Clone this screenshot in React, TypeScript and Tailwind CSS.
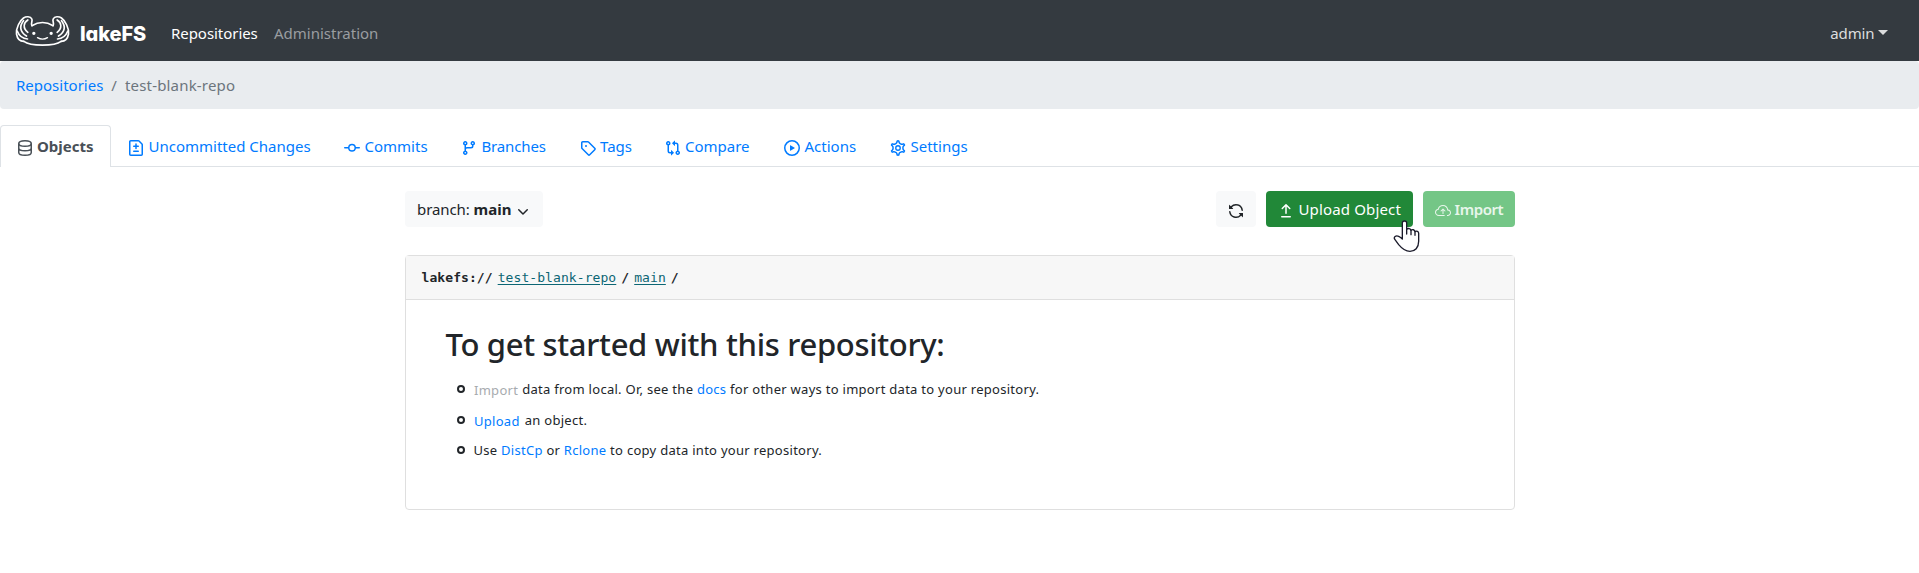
import React from "react";

const icons = {
  fileDiff:
    "M2.75 1.5a.25.25 0 00-.25.25v12.5c0 .138.112.25.25.25h10.5a.25.25 0 00.25-.25V4.664a.25.25 0 00-.073-.177l-2.914-2.914a.25.25 0 00-.177-.073H2.75zM1 1.75C1 .784 1.784 0 2.75 0h7.586c.464 0 .909.184 1.237.513l2.914 2.914c.329.328.513.773.513 1.237v9.586A1.75 1.75 0 0113.25 16H2.75A1.75 1.75 0 011 14.25V1.75zm7 1.5a.75.75 0 01.75.75v1.5h1.5a.75.75 0 010 1.5h-1.5v1.5a.75.75 0 01-1.5 0V7h-1.5a.75.75 0 010-1.5h1.5V4A.75.75 0 018 3.25zm-3 8a.75.75 0 01.75-.75h4.5a.75.75 0 010 1.5h-4.5a.75.75 0 01-.75-.75z",
  commit:
    "M10.5 7.75a2.5 2.5 0 11-5 0 2.5 2.5 0 015 0zm1.43.75a4.002 4.002 0 01-7.86 0H.75a.75.75 0 110-1.5h3.32a4.001 4.001 0 017.86 0h3.32a.75.75 0 110 1.5h-3.32z",
  branch:
    "M11.75 2.5a.75.75 0 100 1.5.75.75 0 000-1.5zm-2.25.75a2.25 2.25 0 113 2.122V6A2.5 2.5 0 0110 8.5H6a1 1 0 00-1 1v1.128a2.251 2.251 0 11-1.5 0V5.372a2.25 2.25 0 111.5 0v1.836A2.492 2.492 0 016 7h4a1 1 0 001-1v-.628A2.25 2.25 0 019.5 3.25zM4.25 12a.75.75 0 100 1.5.75.75 0 000-1.5zM3.5 3.25a.75.75 0 111.5 0 .75.75 0 01-1.5 0z",
  tag:
    "M2.5 7.775V2.75a.25.25 0 01.25-.25h5.025a.25.25 0 01.177.073l6.25 6.25a.25.25 0 010 .354l-5.025 5.025a.25.25 0 01-.354 0l-6.25-6.25a.25.25 0 01-.073-.177zm-1.5 0V2.75C1 1.784 1.784 1 2.75 1h5.025c.464 0 .91.184 1.238.513l6.25 6.25a1.75 1.75 0 010 2.474l-5.026 5.026a1.75 1.75 0 01-2.474 0l-6.25-6.25A1.75 1.75 0 011 7.775zM6 5a1 1 0 100 2 1 1 0 000-2z",
  compare:
    "M9.573.677L7.177 3.073a.25.25 0 000 .354l2.396 2.396A.25.25 0 0010 5.646V4h1a1 1 0 011 1v5.628a2.251 2.251 0 101.5 0V5A2.5 2.5 0 0011 2.5h-1V.854a.25.25 0 00-.427-.177zM6 12v-1.646a.25.25 0 01.427-.177l2.396 2.396a.25.25 0 010 .354l-2.396 2.396A.25.25 0 016 15.146V13.5H5A2.5 2.5 0 012.5 11V5.372a2.25 2.25 0 111.5 0V11a1 1 0 001 1h1zM4 3.25a.75.75 0 11-1.5 0 .75.75 0 011.5 0zM12.75 12a.75.75 0 100 1.5.75.75 0 000-1.5z",
  play:
    "M1.5 8a6.5 6.5 0 1113 0 6.5 6.5 0 01-13 0zM8 0a8 8 0 100 16A8 8 0 008 0zM6.379 5.227A.25.25 0 006 5.442v5.117a.25.25 0 00.379.214l4.264-2.559a.25.25 0 000-.428L6.379 5.227z",
  sync:
    "M8 2.5a5.487 5.487 0 00-4.131 1.869l1.204 1.204A.25.25 0 014.896 6H1.25A.25.25 0 011 5.75V2.104a.25.25 0 01.427-.177l1.38 1.38A7.001 7.001 0 0114.95 7.16a.75.75 0 11-1.49.178A5.501 5.501 0 008 2.5zM1.705 8.005a.75.75 0 01.834.656 5.501 5.501 0 009.592 2.97l-1.204-1.204a.25.25 0 01.177-.427h3.646a.25.25 0 01.25.25v3.646a.25.25 0 01-.427.177l-1.38-1.38A7.001 7.001 0 011.05 8.84a.75.75 0 01.656-.834z",
  chevron:
    "M12.78 6.22a.75.75 0 010 1.06l-4.25 4.25a.75.75 0 01-1.06 0L3.22 7.28a.75.75 0 011.06-1.06L8 9.94l3.72-3.72a.75.75 0 011.06 0z",
  upload:
    "M8.53 1.22a.75.75 0 00-1.06 0L3.72 4.97a.75.75 0 001.06 1.06l2.47-2.47v6.69a.75.75 0 001.5 0V3.56l2.47 2.47a.75.75 0 101.06-1.06L8.53 1.22zM3.75 13a.75.75 0 000 1.5h8.5a.75.75 0 000-1.5h-8.5z",
};

const gearPath =
  "M7.429 1.525a6.593 6.593 0 011.142 0c.036.003.108.036.137.146l.289 1.105c.147.56.55.967.997 1.189.174.086.341.183.501.29.417.278.97.423 1.53.27l1.102-.303c.11-.03.175.016.195.046.219.31.41.641.573.989.014.031.022.11-.059.19l-.815.806c-.411.406-.562.957-.53 1.456a4.588 4.588 0 010 .582c-.032.499.119 1.05.53 1.456l.815.806c.08.08.073.159.059.19a6.494 6.494 0 01-.573.99c-.02.029-.086.074-.195.045l-1.103-.303c-.559-.153-1.112-.008-1.529.27-.16.107-.327.204-.5.29-.449.222-.851.628-.998 1.189l-.289 1.105c-.029.11-.101.143-.137.146a6.613 6.613 0 01-1.142 0c-.036-.003-.108-.037-.137-.146l-.289-1.105c-.147-.56-.55-.967-.997-1.189a4.502 4.502 0 01-.501-.29c-.417-.278-.97-.423-1.53-.27l-1.102.303c-.11.03-.175-.016-.195-.046a6.492 6.492 0 01-.573-.989c-.014-.031-.022-.11.059-.19l.815-.806c.411-.406.562-.957.53-1.456a4.587 4.587 0 010-.582c.032-.499-.119-1.05-.53-1.456l-.815-.806c-.08-.08-.073-.159-.059-.19a6.44 6.44 0 01.573-.99c.02-.029.086-.075.195-.045l1.103.303c.559.153 1.112.008 1.529-.27.16-.107.327-.204.5-.29.449-.222.851-.628.998-1.189l.289-1.105c.029-.11.101-.143.137-.146z";

function Icon({ name, className = "" }: { name: keyof typeof icons; className?: string }) {
  return (
    <svg viewBox="0 0 16 16" fill="currentColor" fillRule="evenodd" className={`size-4 shrink-0 ${className}`}>
      <path d={icons[name]} />
    </svg>
  );
}

function DatabaseIcon() {
  return (
    <svg viewBox="0 0 16 16" fill="none" stroke="currentColor" strokeWidth="1.5" className="mt-1.5 size-4 shrink-0">
      <ellipse cx="8" cy="3.5" rx="6.25" ry="2.75" />
      <path d="M1.75 3.5v9c0 1.52 2.8 2.75 6.25 2.75s6.25-1.23 6.25-2.75v-9M1.75 8c0 1.52 2.8 2.75 6.25 2.75S14.25 9.520 14.25 8" />
    </svg>
  );
}

function GearIcon() {
  return (
    <svg viewBox="0 0 16 16" fill="none" stroke="currentColor" strokeWidth="1.35" className="mt-1.5 size-4 shrink-0">
      <path d={gearPath} transform="translate(8 8) scale(1.1) translate(-8 -8)" />
      <circle cx="8" cy="8" r="2.25" />
    </svg>
  );
}

function CloudUploadIcon() {
  return (
    <svg viewBox="0 0 16 16" fill="currentColor" className="mt-1 size-4 shrink-0">
      <path
        fillRule="evenodd"
        d="M4.406 1.342A5.53 5.53 0 0 1 8 0c2.690 0 4.923 2 5.166 4.579C14.758 4.804 16 6.137 16 7.773 16 9.569 14.502 11 12.687 11H10a.5.5 0 0 1 0-1h2.688C13.979 10 15 8.988 15 7.773c0-1.216-1.020-2.228-2.313-2.228h-.5v-.5C12.188 2.825 10.328 1 8 1a4.530 4.530 0 0 0-2.941 1.100c-.757.652-1.153 1.438-1.153 2.055v.448l-.445.049C2.064 4.805 1 5.952 1 7.318 1 8.785 2.230 10 3.781 10H12v1H3.781C1.708 11 0 9.366 0 7.318c0-1.763 1.266-3.223 2.942-3.593.143-.863.698-1.723 1.464-2.383z"
        transform="translate(0 2)"
      />
      <path d="M7.646 5.646a.5.5 0 0 1 .708 0l2 2a.5.5 0 0 1-.708.708L8.500 7.207V10.500a.5.5 0 0 1-1 0V7.207L6.354 8.354a.5.5 0 1 1-.708-.708z" />
    </svg>
  );
}

function AxolotlLogo() {
  return (
    <svg viewBox="46 45 164 96" className="h-8 w-[55px]" fill="none" stroke="white" strokeWidth="5" strokeLinecap="round" strokeLinejoin="round">
      <path d="M96 77Q128 58 160 77" />
      <path d="M96 77C92 70 99 64 96 57C92 48 78 49 71 54C60 62 48 84 50 102C52 114 58 124 72 124" />
      <path d="M160 77C164 70 157 64 160 57C164 48 178 49 185 54C196 62 208 84 206 102C204 114 198 124 184 124" />
      <path d="M72 124C92 139 164 139 184 124" />
      <path d="M84 60C71 68 68 84 84 97M71 62C58 78 60 96 80 108M52 93C58 108 66 116 83 117" />
      <path d="M172 60C185 68 188 84 172 97M185 62C198 78 196 96 176 108M204 93C198 108 190 116 173 117" />
      <path d="M113 113Q128 122 143 113" strokeWidth="4" />
      <circle cx="102" cy="100" r="2.500" fill="white" />
      <circle cx="154" cy="100" r="2.500" fill="white" />
    </svg>
  );
}

function HandCursor() {
  return (
    <svg
      viewBox="579 147 84 102"
      className="absolute top-[28px] left-[127px] z-10 h-[34px] w-[28px]"
      fill="white"
      stroke="#1b1b2b"
      strokeWidth="4"
      strokeLinejoin="round"
      strokeLinecap="round"
    >
      <path d="M607 207V159C607 151 620 151 620 159V178C624 174 632 175 633 181C637 177 644 179 645 185C650 182 656 184 656 190V214C656 233 645 244 630 244C614 244 605 235 596 224L585 209C579 201 588 195 596 199Q602 202 607 207Z" />
      <path d="M620 178V192M633 181V194M645 185V196" fill="none" />
    </svg>
  );
}

function Tab({ icon, label, className }: { icon: React.ReactNode; label: string; className: string }) {
  return (
    <a className={`flex h-full gap-[4.500px] pt-[9px] pl-[17px] leading-6 text-[#007bff] ${className}`}>
      {icon}
      <span className="whitespace-nowrap">{label}</span>
    </a>
  );
}

function Bullet() {
  return <span className="mr-[9px] size-2 shrink-0 self-center rounded-full border-2 border-[#212529]" />;
}

export default function App() {
  return (
    <div className="min-h-[573px] bg-white font-['Noto_Sans',sans-serif] text-[15px] leading-6 text-[#212529]">
      <nav className="flex h-[61px] items-start bg-[#343a40] pl-[15px]">
        <div className="flex w-[156px] pt-[15px]">
          <AxolotlLogo />
          <span className="ml-[10px] pt-[7px] font-['Inter',sans-serif] text-[20px] leading-6 font-extrabold tracking-[-0.1px] text-white [font-feature-settings:'cv11']">
            lakeFS
          </span>
        </div>
        <span className="w-[103px] pt-[21px] tracking-[-0.050px] text-white">Repositories</span>
        <span className="pt-[21px] text-[#9a9da0]">Administration</span>
        <span className="mr-[31px] ml-auto flex pt-[21px] text-[#dcddde]">
          <span className="tracking-[-0.100px]">admin</span>
          <span className="mt-[9px] ml-[3.500px] h-0 border-x-[5px] border-t-[5px] border-x-transparent border-t-[#dcddde]" />
        </span>
      </nav>

      <div className="flex h-12 gap-2 rounded bg-[#e9ecef] px-4 py-3 text-[#6c757d]">
        <a className="text-[#007bff]">Repositories</a>
        <span>/</span>
        <span className="tracking-[0.180px]">test-blank-repo</span>
      </div>

      <div className="mt-4 flex h-[42px] border-b border-[#dee2e6]">
        <a className="-mb-px flex w-[111px] gap-1 rounded-t border border-b-0 border-[#dee2e6] bg-white pt-2 pl-4 font-bold text-[#495057]">
          <DatabaseIcon />
          <span>Objects</span>
        </a>
        <Tab className="w-[216px]" icon={<Icon name="fileDiff" className="mt-1.5" />} label="Uncommitted Changes" />
        <Tab className="w-[117px]" icon={<Icon name="commit" className="mt-1.5" />} label="Commits" />
        <Tab className="w-[118.500px] tracking-[-0.150px]" icon={<Icon name="branch" className="mt-1.5" />} label="Branches" />
        <Tab className="w-[85px]" icon={<Icon name="tag" className="mt-1.5" />} label="Tags" />
        <Tab className="w-[119.500px]" icon={<Icon name="compare" className="mt-1.5" />} label="Compare" />
        <Tab className="w-[106px]" icon={<Icon name="play" className="mt-1.5" />} label="Actions" />
        <Tab className="w-[112px]" icon={<GearIcon />} label="Settings" />
      </div>

      <main className="mx-auto w-[1110px] pt-6">
        <div className="flex h-9">
          <button className="flex w-[138px] items-center rounded bg-[#f8f9fa] pl-[12.500px]">
            <span className="tracking-[-0.1px]">branch:</span>
            <b className="ml-1">main</b>
            <Icon name="chevron" className="mt-1 ml-1" />
          </button>
          <div className="relative ml-auto flex">
            <button className="mr-[10px] flex w-10 items-center justify-center rounded bg-[#f8f9fa]">
              <Icon name="sync" className="mt-1" />
            </button>
            <button className="mr-[10px] flex w-[147px] items-center rounded bg-[#218838] pl-3 text-white">
              <Icon name="upload" className="mt-1" />
              <span className="ml-[5px] tracking-[0.150px]">Upload Object</span>
            </button>
            <button className="flex w-[92px] items-center rounded bg-[#74c686] pl-3 font-semibold text-[#e8f6eb]">
              <CloudUploadIcon />
              <span className="ml-1 tracking-[-0.4px]">Import</span>
            </button>
            <div className="absolute top-0 left-[50px]">
              <HandCursor />
            </div>
          </div>
        </div>

        <section className="mt-7 h-[255px] rounded border border-[#dfdfdf]">
          <div className="flex h-11 items-start border-b border-[#dfdfdf] bg-[#f7f7f7] pt-[10px] pl-4 font-['DejaVu_Sans_Mono',monospace] text-[13px] tracking-[0.080px]">
            <b className="mr-[5px]">lakefs://</b>
            <a className="text-[#0c6674] underline underline-offset-2">test-blank-repo</a>
            <b className="mx-[5px]">/</b>
            <a className="text-[#0c6674] underline underline-offset-2">main</a>
            <b className="ml-[5px]">/</b>
          </div>
          <div className="pt-[25px] pl-10">
            <h2 className="text-[31px] leading-[38px] font-medium tracking-[-0.310px]">To get started with this repository:</h2>
            <ul className="mt-[14px] pl-[11px] text-[13px] tracking-[0.280px]">
              <li className="flex h-[30.500px] items-start whitespace-pre">
                <span className="flex h-6">
                  <Bullet />
                </span>
                <span className="mr-1 ml-[0.500px] pt-px text-[#a7abaf]">Import</span>
                <span>
                  data from local. Or, see the <a className="text-[#007bff]">docs</a> for other ways to import data to your repository.
                </span>
              </li>
              <li className="flex h-[30.500px] items-start whitespace-pre">
                <span className="flex h-6">
                  <Bullet />
                </span>
                <span className="mr-[5px] ml-[0.500px] pt-px text-[#007bff]">Upload</span>
                <span>an object.</span>
              </li>
              <li className="flex items-start whitespace-pre">
                <span className="flex h-6">
                  <Bullet />
                </span>
                <span>
                  Use <a className="text-[#007bff]">DistCp</a> or <a className="text-[#007bff]">Rclone</a> to copy data into your repository.
                </span>
              </li>
            </ul>
          </div>
        </section>
      </main>
    </div>
  );
}
